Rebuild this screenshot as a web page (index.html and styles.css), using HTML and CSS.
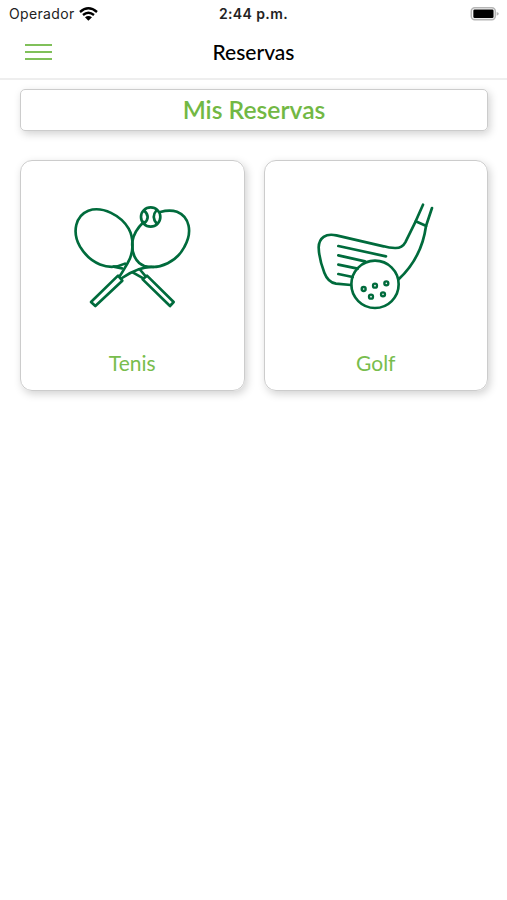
FILE: index.html
```
<!DOCTYPE html>
<html lang="es">
	<head>
		<meta charset="utf-8">
		<title>Reservas</title>
		<link rel="stylesheet" href="styles.css">
	</head>
	<body>

		<header class="top">
			<div class="status">
				<div class="carrier">
					<span>Operador</span>
					<svg class="wifi" viewBox="0 0 57 42">
						<path d="M3 15 Q28 -7 54 15" />
						<path d="M12 24 Q28 10 45 24" />
						<path class="dot" d="M18 31 Q28 23 39 31 L28 41 Z" />
					</svg>
				</div>
				<div class="time">2:44 p.m.</div>
				<svg class="battery" viewBox="0 0 93 45">
					<rect class="shell" x="2.5" y="2.5" width="77" height="38" rx="11" />
					<rect class="charge" x="9" y="8" width="65" height="27" rx="4" />
					<path class="tip" d="M84 16 Q91 18 91 22 Q91 26 84 28 Z" />
				</svg>
			</div>
			<div class="nav">
				<div class="menu">
					<span></span>
					<span></span>
					<span></span>
				</div>
				<h1>Reservas</h1>
			</div>
		</header>

		<main class="content">
			<a class="mine">Mis Reservas</a>

			<div class="sports">
				<a class="card">
					<svg class="icon" viewBox="0 0 405 360">
						<!-- raqueta izquierda -->
						<path d="M180 206 C130 230 75 205 45 155 C20 111 32 62 70 47 C113 32 168 62 191 101 C207 130 207 173 188 204 C181 215 174 229 165 242" />
						<path d="M146 215 L171 220" />
						<path d="M159 242 L78 321 L91 333 L172 257 Z" />
						<!-- raqueta derecha -->
						<path d="M236 81 Q207 108 202 140 C199 176 213 204 238 213 C287 225 336 198 358 156 C384 110 373 65 336 50 Q313 43 286 51" />
						<path d="M266 216 Q225 213 171 249" />
						<path d="M203 232 L235 250 M226 225 L242 244" />
						<path d="M246 242 L326 321 L315 333 L233 253 Z" />
						<!-- pelota -->
						<circle cx="257" cy="66" r="29" />
						<path d="M238 47 Q258 66 238 85 M275 45 Q257 66 276 87" />
					</svg>
					<span>Tenis</span>
				</a>
				<a class="card">
					<svg class="icon" viewBox="-5 0 405 360">
						<!-- palo -->
						<path d="M340 29 L318 79 L287 142 Q277 160 256 159 Q238 159 222 154 L80 121 C48 114 28 128 27 157 Q28 192 44 233 Q55 262 79 266 L124 270" />
						<path d="M367 39 L349 93 C342 146 321 202 267 253 M318 79 L350 93" />
						<path d="M86 153 L229 184 M86 181 L166 199 M86 209 L144 221 M86 237 L129 246" />
						<!-- pelota -->
						<circle cx="196" cy="268" r="71" />
						<g class="dimples">
							<circle cx="162" cy="282" r="6" />
							<circle cx="196" cy="272" r="6" />
							<circle cx="230" cy="265" r="6" />
							<circle cx="184" cy="305" r="6" />
							<circle cx="220" cy="298" r="6" />
						</g>
					</svg>
					<span>Golf</span>
				</a>
			</div>
		</main>

	</body>
</html>
```
FILE: styles.css
```
* {
	margin: 0;
	padding: 0;
	box-sizing: border-box;
}

body {
	min-height: 100vh;
	background-color: #fff;
	font-family: Lato, "Liberation Sans", sans-serif;
}

.top {
	height: 80px;
	border-bottom: 2px solid #eee;
}

.status {
	display: grid;
	grid-template-columns: 1fr auto 1fr;
	align-items: center;
	height: 27px;
	padding: 0 7px 0 9px;
	font-family: Inter, "Liberation Sans", sans-serif;
	font-size: 14px;
	color: #222;
}

.carrier {
	display: flex;
	align-items: center;
	gap: 4px;
	letter-spacing: 0.35px;
}

.wifi {
	width: 19px;
	height: 14px;
	fill: none;
	stroke: #000;
	stroke-width: 7;
}

.wifi .dot {
	fill: #000;
	stroke: none;
}

.time {
	margin-right: 2px;
	font-weight: 600;
	letter-spacing: 0.4px;
}

.battery {
	justify-self: end;
	width: 30px;
	height: 14px;
}

.battery .shell {
	fill: #fff;
	stroke: #b5b5b5;
	stroke-width: 5;
}

.battery .charge {
	fill: #000;
}

.battery .tip {
	fill: #b5b5b5;
}

.nav {
	display: grid;
	grid-template-columns: 1fr auto 1fr;
	height: 50px;
	padding: 0 25px;
}

.menu {
	display: flex;
	flex-direction: column;
	gap: 5px;
	width: 27px;
	padding-top: 17px;
}

.menu span {
	height: 2px;
	background-color: #80c05a;
}

.nav h1 {
	font-size: 21px;
	font-weight: 500;
	line-height: 50px;
	color: #000;
}

.content {
	padding: 9px 19px 20px 20px;
}

.mine {
	display: block;
	height: 42px;
	border: 1px solid #ccc;
	border-radius: 5px;
	box-shadow: 2px 3px 8px rgba(0, 0, 0, 0.18);
	line-height: 40px;
	text-align: center;
	font-size: 24.7px;
	font-weight: 600;
	color: #72b844;
}

.sports {
	display: grid;
	grid-template-columns: 1fr 1fr;
	gap: 19px;
	margin-top: 29px;
}

.card {
	display: flex;
	flex-direction: column;
	align-items: center;
	height: 231px;
	padding-top: 34px;
	border: 1px solid #ccc;
	border-radius: 12px;
	box-shadow: 2px 3px 8px rgba(0, 0, 0, 0.18);
	font-size: 21px;
	line-height: 26px;
	color: #78bd4d;
}

.icon {
	width: 135px;
	height: 120px;
	margin-bottom: 35px;
	fill: none;
	stroke: #006b3c;
	stroke-width: 8;
	stroke-linecap: round;
	stroke-linejoin: round;
}

.dimples {
	stroke-width: 7;
}
```
